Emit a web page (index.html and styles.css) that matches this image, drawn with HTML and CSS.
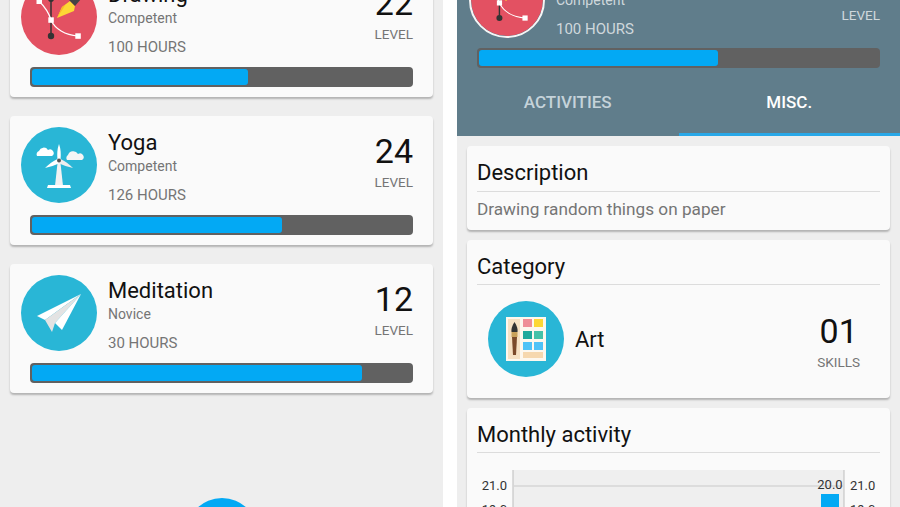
FILE: index.html
```html
<!DOCTYPE html>
<html lang="en">
<head>
    <meta charset="UTF-8">
    <meta name="viewport" content="width=device-width, initial-scale=1.0">
    <title>Skills</title>
    <link rel="stylesheet" href="styles.css">
</head>
<body>
    <svg class="icon-defs" width="0" height="0">
        <symbol id="icon-drawing" viewBox="0 0 76 76">
            <circle cx="38" cy="38" r="38" fill="#e35162"/>
            <path d="M30 20V57" stroke="#333" stroke-width="1.5"/>
            <circle cx="30" cy="20" r="3" fill="#333"/>
            <circle cx="30" cy="57" r="3.2" fill="#333"/>
            <path d="M18 22C24 28 28 34 30 41C34 50 44 56 57 57" fill="none" stroke="#fff" stroke-width="1.2"/>
            <rect x="15.500" y="19.500" width="5.500" height="5.500" fill="#fff"/>
            <rect x="27.300" y="38.300" width="5.500" height="5.500" fill="#fff"/>
            <rect x="54.300" y="54.300" width="5.500" height="5.500" fill="#fff"/>
            <path d="M36 39L41 28L49 22L54 27L53 32Z" fill="#fdd835"/>
            <path d="M36 39L41 28L45 25Z" fill="#f9b928"/>
            <path d="M48 21L53 14L60 20L54 27Z" fill="#444"/>
        </symbol>
        <symbol id="icon-yoga" viewBox="0 0 76 76">
            <circle cx="38" cy="38" r="38" fill="#29b6d6"/>
            <path d="M16 29A3.500 3.500 0 0 1 18 24A5 5 0 0 1 27 23A3.500 3.500 0 0 1 31 29Z" fill="#fff"/>
            <path d="M46 33A3.500 3.500 0 0 1 47 28A5.500 5.500 0 0 1 57 27A3.500 3.500 0 0 1 61 33Z" fill="#f5f5f5"/>
            <path d="M36.500 36H39.500L42 59H34Z" fill="#f2f2f2"/>
            <path d="M27 58H49L50 61H26Z" fill="#fff"/>
            <path d="M38 17C40 22 40 28 39.500 33H36.500C36 28 36 22 38 17Z" fill="#fff"/>
            <path d="M36.500 32L39 36C34 38 29 40 24 41C28 37 32 34 36.500 32Z" fill="#fff"/>
            <path d="M39.500 32L37 36C42 38 47 40 52 41C48 37 44 34 39.500 32Z" fill="#eee"/>
            <circle cx="38" cy="33.500" r="2" fill="#555"/>
        </symbol>
        <symbol id="icon-meditation" viewBox="0 0 76 76">
            <circle cx="38" cy="38" r="38" fill="#29b6d6"/>
            <path d="M60 19L16 41L24 45Z" fill="#fff"/>
            <path d="M60 19L24 45L31 57L34 48Z" fill="#e3e3e3"/>
            <path d="M60 19L34 48L41 55Z" fill="#fff"/>
        </symbol>
        <symbol id="icon-art" viewBox="0 0 76 76">
            <circle cx="38" cy="38" r="38" fill="#29b6d6"/>
            <rect x="18" y="16" width="40" height="44" fill="#fdf8ee"/>
            <rect x="20" y="18" width="12" height="40" fill="#f6e1c3"/>
            <rect x="35" y="51" width="20" height="6" fill="#f6d8ae"/>
            <rect x="35" y="18" width="9" height="8" fill="#ef8f97"/>
            <rect x="46" y="18" width="9" height="8" fill="#fdd835"/>
            <rect x="35" y="30" width="9" height="8" fill="#1fa99c"/>
            <rect x="46" y="30" width="9" height="8" fill="#45c2a8"/>
            <rect x="35" y="41" width="9" height="8" fill="#4fc3f7"/>
            <rect x="46" y="41" width="9" height="8" fill="#4fc3f7"/>
            <path d="M24 36H29L28 54H25Z" fill="#7b4a2a"/>
            <rect x="23.500" y="31" width="6" height="5" fill="#c9a15a"/>
            <path d="M26.500 21C29 25 30 28 29.500 31H23.500C23 28 24 25 26.500 21Z" fill="#333"/>
        </symbol>
    </svg>

    <div class="screen">
        <div class="phone">
            <div class="skill-list">
                <div class="card skill">
                    <div class="skill-top">
                        <svg class="skill-icon"><use href="#icon-drawing"/></svg>
                        <div class="skill-info">
                            <div class="skill-name">Drawing</div>
                            <div class="skill-rank">Competent</div>
                            <div class="skill-hours">100 HOURS</div>
                        </div>
                        <div class="skill-level">
                            <div class="level-num">22</div>
                            <div class="level-label">LEVEL</div>
                        </div>
                    </div>
                    <div class="bar"><div class="bar-fill" style="width: 57%"></div></div>
                </div>

                <div class="card skill">
                    <div class="skill-top">
                        <svg class="skill-icon"><use href="#icon-yoga"/></svg>
                        <div class="skill-info">
                            <div class="skill-name">Yoga</div>
                            <div class="skill-rank">Competent</div>
                            <div class="skill-hours">126 HOURS</div>
                        </div>
                        <div class="skill-level">
                            <div class="level-num">24</div>
                            <div class="level-label">LEVEL</div>
                        </div>
                    </div>
                    <div class="bar"><div class="bar-fill" style="width: 66%"></div></div>
                </div>

                <div class="card skill">
                    <div class="skill-top">
                        <svg class="skill-icon"><use href="#icon-meditation"/></svg>
                        <div class="skill-info">
                            <div class="skill-name">Meditation</div>
                            <div class="skill-rank">Novice</div>
                            <div class="skill-hours">30 HOURS</div>
                        </div>
                        <div class="skill-level">
                            <div class="level-num">12</div>
                            <div class="level-label">LEVEL</div>
                        </div>
                    </div>
                    <div class="bar"><div class="bar-fill" style="width: 87%"></div></div>
                </div>
            </div>
            <div class="fab"></div>
        </div>

        <div class="phone">
            <div class="detail-header">
                <div class="skill-top">
                    <svg class="skill-icon ringed"><use href="#icon-drawing"/></svg>
                    <div class="skill-info">
                        <div class="skill-name">Drawing</div>
                        <div class="skill-rank">Competent</div>
                        <div class="skill-hours">100 HOURS</div>
                    </div>
                    <div class="skill-level">
                        <div class="level-num">22</div>
                        <div class="level-label">LEVEL</div>
                    </div>
                </div>
                <div class="bar"><div class="bar-fill" style="width: 60%"></div></div>
                <div class="tabs">
                    <div class="tab">ACTIVITIES</div>
                    <div class="tab active">MISC.</div>
                </div>
            </div>

            <div class="detail-body">
                <div class="card section">
                    <h2>Description</h2>
                    <p>Drawing random things on paper</p>
                </div>

                <div class="card section">
                    <h2>Category</h2>
                    <div class="category">
                        <svg class="skill-icon"><use href="#icon-art"/></svg>
                        <div class="category-name">Art</div>
                        <div class="skill-level">
                            <div class="level-num">01</div>
                            <div class="level-label">SKILLS</div>
                        </div>
                    </div>
                </div>

                <div class="card section">
                    <h2>Monthly activity</h2>
                    <svg class="chart" width="403" height="80">
                        <rect x="36" y="0" width="331" height="80" fill="#efefef"/>
                        <path d="M36 0V80M367 0V80" stroke="#bdbdbd"/>
                        <path d="M36 16H367" stroke="#d6d6d6" stroke-width="1.500"/>
                        <rect x="344" y="24" width="18" height="56" fill="#03a9f4"/>
                        <text x="353" y="19" text-anchor="middle">20.0</text>
                        <text x="30" y="20" text-anchor="end">21.0</text>
                        <text x="30" y="44" text-anchor="end">19.0</text>
                        <text x="373" y="20">21.0</text>
                        <text x="373" y="44">19.0</text>
                    </svg>
                </div>
            </div>
        </div>
    </div>
</body>
</html>
```

FILE: styles.css
```css
body {
    font-family: Roboto, "Liberation Sans", sans-serif;
    background: white;
    margin: 0;
    height: 507px;
    overflow: hidden;
}
.icon-defs {
    position: absolute;
}
.screen {
    display: flex;
    justify-content: space-between;
    height: 507px;
}
.phone {
    position: relative;
    width: 443px;
    background: #eeeeee;
    overflow: hidden;
}
.card {
    background: #fafafa;
    border-radius: 4px;
    box-shadow: 0 2px 2px rgba(0, 0, 0, 0.25);
}

/* skill cards */
.skill-list {
    display: flex;
    flex-direction: column;
    gap: 19px;
    margin: -32px 10px 0;
}
.skill {
    height: 129px;
    padding: 11px 20px 0;
    box-sizing: border-box;
}
.skill-top {
    display: flex;
    height: 76px;
}
.skill-icon {
    flex: none;
    width: 76px;
    height: 76px;
    margin-left: -9px;
}
.skill-icon.ringed {
    border: 2px solid #f5f5f5;
    border-radius: 50%;
    box-sizing: border-box;
}
.skill-info {
    flex: 1;
    margin-left: 11px;
    padding-top: 3px;
}
.skill-name {
    font-size: 22px;
    line-height: 26px;
    color: #111;
}
.skill-rank {
    font-size: 14px;
    line-height: 20px;
    color: #757575;
}
.skill-hours {
    margin-top: 9px;
    font-size: 15px;
    line-height: 20px;
    color: #757575;
}
.skill-level {
    text-align: right;
    padding-top: 4px;
}
.level-num {
    font-size: 34px;
    line-height: 40px;
    color: #111;
}
.level-label {
    margin-top: 1px;
    font-size: 13.500px;
    line-height: 20px;
    color: #757575;
}
.bar {
    margin-top: 12px;
    height: 20px;
    padding: 2px;
    box-sizing: border-box;
    background: #616161;
    border-radius: 4px;
}
.bar-fill {
    height: 16px;
    background: #03a9f4;
    border-radius: 3px;
}
.fab {
    position: absolute;
    left: 186px;
    top: 498px;
    width: 72px;
    height: 72px;
    border-radius: 50%;
    background: #03a9f4;
}

/* detail screen */
.detail-header {
    display: flow-root;
    height: 136px;
    background: #607d8b;
    padding: 0 20px;
    box-sizing: border-box;
}
.detail-header .skill-top {
    margin-top: -38px;
}
.detail-header .skill-info {
    padding-top: 2px;
}
.detail-header .skill-name {
    color: #fff;
}
.detail-header .skill-rank,
.detail-header .skill-hours,
.detail-header .level-label {
    color: #cfd8dc;
}
.detail-header .level-num {
    color: #fff;
}
.detail-header .skill-level {
    padding-top: 2px;
}
.detail-header .bar {
    margin-top: 10px;
}
.detail-header .skill-icon {
    margin-left: -8px;
}
.tabs {
    display: flex;
    margin: 0 -20px;
}
.tab {
    flex: 1;
    height: 68px;
    line-height: 69px;
    box-sizing: border-box;
    text-align: center;
    font-size: 17px;
    font-weight: 500;
    color: #c5d3da;
}
.tab.active {
    color: #fff;
    border-bottom: 3px solid #29a8e8;
}
.detail-body {
    display: flex;
    flex-direction: column;
    gap: 10px;
    padding: 10px;
}
.section {
    padding: 0 10px 9px;
}
.section h2 {
    margin: 0;
    height: 44px;
    line-height: 53px;
    font-size: 22px;
    font-weight: 400;
    color: #111;
    border-bottom: 1px solid #dcdcdc;
}
.section:first-child h2 {
    height: 45px;
}
.section p {
    margin: 5px 0 0;
    font-size: 17.200px;
    line-height: 24px;
    color: #757575;
}
.category {
    display: flex;
    align-items: center;
    padding: 16px 20px 12px 21px;
}
.category .skill-icon {
    margin-left: -10px;
}
.category-name {
    flex: 1;
    margin-left: 11px;
    font-size: 22px;
    color: #111;
}
.category .skill-level {
    text-align: center;
    padding: 4px 0 0;
}
.chart {
    display: block;
    margin-top: 17px;
}
.chart text {
    font-size: 13px;
    fill: #333;
}
```
